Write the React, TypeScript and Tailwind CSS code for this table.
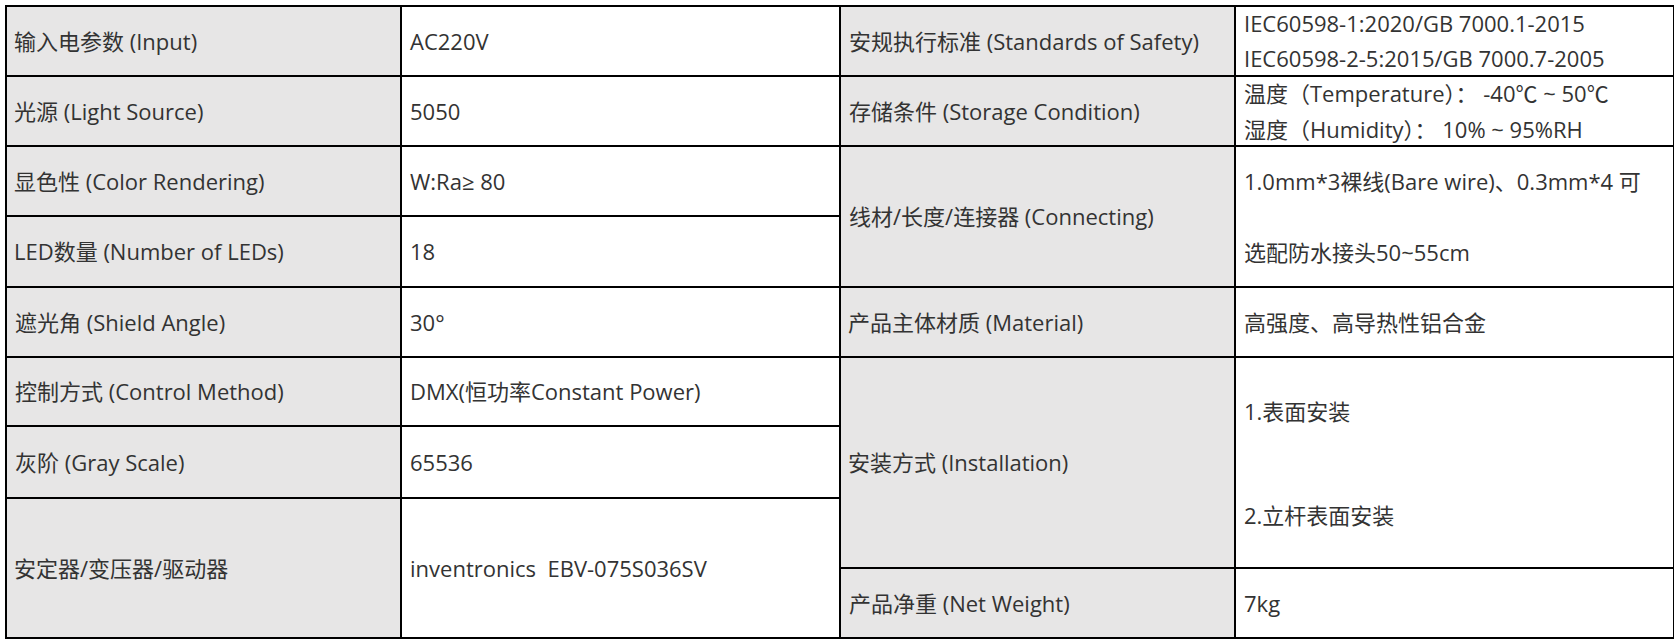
import React from 'react'

type Cell = {
    text: React.ReactNode
    head?: boolean
    span?: 2 | 3
    leading?: string
}

const cells: Cell[] = [
    { text: "输入电参数 (Input)", head: true },
    { text: "AC220V" },
    { text: "安规执行标准 (Standards of Safety)", head: true },
    { text: <>IEC60598-1:2020/GB 7000.1-2015<br />IEC60598-2-5:2015/GB 7000.7-2005</>, leading: "leading-[35px]" },

    { text: "光源 (Light Source)", head: true },
    { text: "5050" },
    { text: "存储条件 (Storage Condition)", head: true },
    { text: <>温度（Temperature）： -40℃ ~ 50℃<br />湿度（Humidity）： 10% ~ 95%RH</>, leading: "leading-[36px]" },

    { text: "显色性 (Color Rendering)", head: true },
    { text: "W:Ra≥ 80" },
    { text: "线材/长度/连接器 (Connecting)", head: true, span: 2 },
    { text: <>1.0mm*3裸线(Bare wire)、0.3mm*4 可<br />选配防水接头50~55cm</>, span: 2, leading: "leading-[71px]" },

    { text: "LED数量 (Number of LEDs)", head: true },
    { text: "18" },

    { text: "遮光角 (Shield Angle)", head: true },
    { text: "30°" },
    { text: "产品主体材质 (Material)", head: true },
    { text: "高强度、高导热性铝合金" },

    { text: "控制方式 (Control Method)", head: true },
    { text: "DMX(恒功率Constant Power)" },
    { text: "安装方式 (Installation)", head: true, span: 3 },
    { text: <>1.表面安装<br />2.立杆表面安装</>, span: 3, leading: "leading-[104px]" },

    { text: "灰阶 (Gray Scale)", head: true },
    { text: "65536" },

    { text: "安定器/变压器/驱动器", head: true, span: 2 },
    { text: "inventronics  EBV-075S036SV", span: 2 },
    { text: "产品净重 (Net Weight)", head: true },
    { text: "7kg" },
]

export default function App() {
    return (
        <div className="min-h-[643px] bg-white pt-[5px] pl-[5px] font-['Open_Sans','Noto_Sans_CJK_SC',sans-serif] text-[22px] text-[#333333]">
            <div className="grid w-[1669px] grid-cols-[393px_437px_393px_437px] grid-rows-[68px_68px_68px_69px_68px_67px_70px_68px_68px] gap-[2px] bg-black p-[2px]">
                {cells.map((c, i) => (
                    <div
                        key={i}
                        className={[
                            "flex items-center whitespace-pre",
                            c.head ? "bg-[#e7e6e6]" : "bg-white",
                            i % 4 === 0 || (c.head && c.text === "安定器/变压器/驱动器") ? "pl-[7px]" : "pl-[8px]",
                            c.span === 2 ? "row-span-2" : "",
                            c.span === 3 ? "row-span-3" : "",
                            c.leading ?? "leading-[35px]",
                        ].join(" ")}
                    >
                        <div>{c.text}</div>
                    </div>
                ))}
            </div>
        </div>
    )
}
